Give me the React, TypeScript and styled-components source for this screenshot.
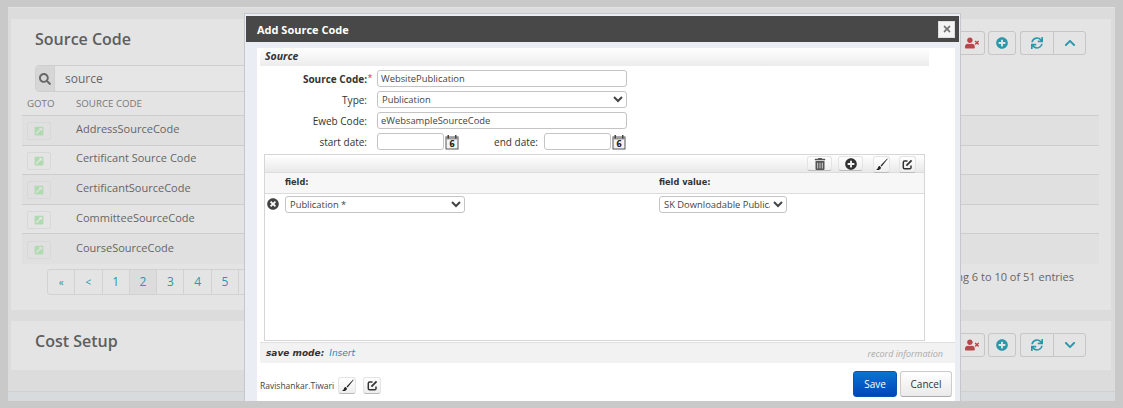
import {ReactNode} from "react";
import styled, {createGlobalStyle} from "styled-components";
import {
  FaChevronDown,
  FaChevronUp,
  FaExternalLinkSquareAlt,
  FaPlusCircle,
  FaSearch,
  FaSync,
  FaTimes,
  FaTimesCircle,
  FaTrashAlt,
  FaUserTimes,
} from "react-icons/fa";

const teal = "#2b97ab";
const textColor = "#5e5e5e";

const GlobalStyle = createGlobalStyle`
  html, body {
    margin: 0;
    padding: 0;
    height: 408px;
    overflow: hidden;
    background: #c9c9c9;
    font-family: "Open Sans", sans-serif;
  }
`;

const Screen = styled.div`
  position: relative;
  width: 1123px;
  height: 408px;
  padding: 7px 8px;
  box-sizing: border-box;
  overflow: hidden;
`;

const Page = styled.div`
  width: 1107px;
  height: 394px;
  box-sizing: border-box;
  padding: 11px 4px 0 3px;
  background: #dcdcdc;
  border-top: 1px solid #e2e2e2;
  display: flex;
  flex-direction: column;
  gap: 11px;
  position: relative;
`;

const PageFooter = styled.div`
  margin: auto -4px 0 -3px;
  height: 9px;
  background: #d8dbde;
  border-top: 1px solid #d0d0d0;
`;

const Panel = styled.section`
  background: #e4e4e4;
  padding: 0 12px 0 11px;
`;

const PanelHeader = styled.div<{$height: number}>`
  height: ${(p) => p.$height}px;
  padding: 12px 13px 0 13px;
  box-sizing: border-box;
  display: flex;
  justify-content: space-between;
  align-items: flex-start;
`;

const PanelTitle = styled.h2`
  margin: 0;
  font-size: 16px;
  line-height: 16px;
  font-weight: 600;
  color: ${textColor};
`;

const ButtonBar = styled.div`
  display: flex;
  gap: 3px;
`;

const ButtonGroup = styled.div`
  display: flex;
  margin-left: 1px;
`;

const BarButton = styled.div<{$color: string; $width: number; $size?: number}>`
  width: ${(p) => p.$width}px;
  height: 24px;
  box-sizing: border-box;
  border: 1px solid #c6c6c6;
  border-radius: 3px;
  color: ${(p) => p.$color};
  display: flex;
  align-items: center;
  justify-content: center;
  font-size: ${(p) => p.$size ?? 12}px;

  ${ButtonGroup} > &:first-child {
    border-radius: 3px 0 0 3px;
    border-right: none;
  }
  ${ButtonGroup} > &:last-child {
    border-radius: 0 3px 3px 0;
  }
`;

const SearchBox = styled.div`
  margin-left: 13px;
  width: 600px;
  height: 27px;
  box-sizing: border-box;
  border: 1px solid #cfcfcf;
  border-radius: 4px;
  display: flex;
  background: #e6e6e6;
`;

const SearchAddon = styled.div`
  width: 18px;
  background: #d6d6d6;
  color: #666;
  font-size: 12px;
  display: flex;
  align-items: center;
  justify-content: center;
  border-right: 1px solid #cfcfcf;
`;

const SearchText = styled.div`
  padding-left: 10px;
  font-size: 12px;
  line-height: 25px;
  color: #666;
`;

const TableHead = styled.div`
  display: grid;
  grid-template-columns: 49px 1fr;
  height: 24px;
  align-items: center;
  padding-left: 5px;
  padding-bottom: 1px;
  font-size: 9.7px;
  color: #777;
  text-transform: uppercase;
  border-bottom: 1px solid #cdcdcd;
  box-sizing: border-box;
`;

const Row = styled.div<{$dark: boolean}>`
  display: grid;
  grid-template-columns: 49px 1fr;
  height: 29.6px;
  padding-left: 5px;
  box-sizing: border-box;
  background: ${(p) => (p.$dark ? "#e0e0e0" : "#e4e4e4")};
  border-bottom: 1px solid #cdcdcd;
  align-items: center;

  &:last-child {
    border-bottom: none;
  }
`;

const GotoButton = styled.div`
  width: 24px;
  height: 18px;
  box-sizing: border-box;
  margin-top: 2px;
  border: 1px solid #d8d8d8;
  border-radius: 2px;
  color: #b0dbb0;
  font-size: 10px;
  display: flex;
  align-items: center;
  justify-content: center;
`;

const RowName = styled.div`
  font-size: 11px;
  line-height: 15px;
  margin-top: -4px;
  color: #666;
`;

const TableFoot = styled.div`
  display: flex;
  justify-content: space-between;
  align-items: flex-start;
  padding: 5px 25px 0 25px;
  height: 46px;
  box-sizing: border-box;
`;

const Pager = styled.div`
  display: flex;
  height: 26px;
  border: 1px solid #d2d2d2;
  border-radius: 3px;
  width: 500px;
  box-sizing: border-box;
`;

const PageLink = styled.div<{$active?: boolean; $small?: boolean}>`
  width: 27.3px;
  box-sizing: border-box;
  border-right: 1px solid #d2d2d2;
  background: ${(p) => (p.$active ? "#dcdcdc" : "transparent")};
  color: ${teal};
  font-size: ${(p) => (p.$small ? 10 : 12)}px;
  display: flex;
  align-items: center;
  justify-content: center;
`;

const EntryInfo = styled.div`
  font-size: 11px;
  line-height: 14px;
  color: #666;
  margin-top: 1px;
`;

const Dialog = styled.div`
  position: absolute;
  left: 244px;
  top: 13px;
  width: 717px;
  height: 388px;
  box-sizing: border-box;
  padding: 2px 0 0 1px;
  background: #eaeef4;
  border: 1px solid #c4c7cb;
  border-bottom: none;
  display: flex;
  flex-direction: column;
`;

const DialogTitle = styled.div`
  height: 26px;
  margin-right: 1px;
  flex: none;
  background: #484848;
  display: flex;
  align-items: center;
  justify-content: space-between;
  padding: 0 4px 0 11px;
  color: #fff;
  font-size: 11px;
  font-weight: 700;
`;

const CloseButton = styled.div`
  width: 17px;
  height: 17px;
  background: #f4f4f4;
  border: 1px solid #ddd;
  box-sizing: border-box;
  color: #777;
  font-size: 10px;
  display: flex;
  align-items: center;
  justify-content: center;
`;

const DialogBody = styled.div`
  flex: 1;
  margin: 6px 5px 0 11px;
  background: #fff;
  display: flex;
  flex-direction: column;
  min-height: 0;
`;

const SectionHead = styled.div`
  height: 18px;
  margin: 0 26px 0 3px;
  padding-left: 5px;
  background: linear-gradient(#fff, #ececec);
  font-size: 10.5px;
  line-height: 17px;
  font-weight: 700;
  font-style: italic;
  color: #333;
`;

const Form = styled.div`
  padding-top: 4px;
  display: flex;
  flex-direction: column;
  gap: 4px;
`;

const FormRow = styled.div`
  display: flex;
  align-items: center;
  height: 17px;
`;

const Label = styled.label<{$bold?: boolean; $width?: number}>`
  width: ${(p) => p.$width ?? 120}px;
  flex: none;
  padding-right: ${(p) => (p.$width ? 6 : 10)}px;
  box-sizing: border-box;
  text-align: right;
  font-size: 10px;
  font-weight: ${(p) => (p.$bold ? 700 : 400)};
  color: #333;
  position: relative;
`;

const Required = styled.span`
  position: absolute;
  right: 4.5px;
  top: -1px;
  color: #d33;
  font-size: 9px;
  font-weight: 400;
`;

const TextInput = styled.input<{$width: number}>`
  width: ${(p) => p.$width}px;
  height: 17px;
  flex: none;
  box-sizing: border-box;
  margin: 0;
  padding: 0 3px;
  border: 1px solid #c4c4c4;
  border-radius: 3px;
  outline: none;
  background: #fff;
  font-family: inherit;
  font-size: 9.4px;
  color: #444;
`;

const SelectInput = styled.select<{$width: number}>`
  width: ${(p) => p.$width}px;
  height: 17px;
  flex: none;
  box-sizing: border-box;
  margin: 0;
  padding: 0;
  border: 1px solid #c4c4c4;
  border-radius: 3px;
  outline: none;
  background: #fff;
  font-family: inherit;
  font-size: 9.4px;
  color: #444;
`;

const DateIcon = styled.svg`
  flex: none;
  margin-left: 1px;
`;

const GridPanel = styled.div`
  margin: 4px 0 0 7px;
  width: 661px;
  height: 187px;
  box-sizing: border-box;
  border: 1px solid #d6d6d6;
  flex: none;
`;

const GridToolbar = styled.div`
  height: 18px;
  background: linear-gradient(#fff, #e9e9e9);
  border-bottom: 1px solid #dcdcdc;
  display: flex;
  justify-content: flex-end;
  padding-right: 8px;
  gap: 6px;
  box-sizing: border-box;
`;

const ToolButton = styled.div<{$width: number; $gap?: number; $flat?: boolean; $tone?: string}>`
  width: ${(p) => p.$width}px;
  height: ${(p) => (p.$flat ? 15 : 17)}px;
  box-sizing: border-box;
  margin-left: ${(p) => p.$gap ?? 0}px;
  margin-top: 1px;
  border-radius: 3px;
  border: 1px solid #e4e4e4;
  border-bottom-color: #bbb;
  background: linear-gradient(#fff, #eee);
  color: ${(p) => p.$tone ?? "#333"};
  font-size: ${(p) => (p.$flat ? 12 : 11)}px;
  display: flex;
  align-items: ${(p) => (p.$flat ? "flex-end" : "center")};
  justify-content: center;
  overflow: hidden;
`;

const GridCols = styled.div`
  display: grid;
  grid-template-columns: 374px 1fr;
  padding-left: 20px;
`;

const GridHead = styled(GridCols)`
  height: 21px;
  align-items: center;
  padding-bottom: 2px;
  background: #f7f7f7;
  border-bottom: 1px solid #dcdcdc;
  box-sizing: border-box;
  font-family: "DejaVu Sans", sans-serif;
  font-size: 8.2px;
  font-weight: 700;
  color: #333;
`;

const GridRow = styled(GridCols)`
  position: relative;
  padding-top: 2px;
`;

const RemoveIcon = styled.div`
  position: absolute;
  left: 2px;
  top: 4px;
  color: #444;
  font-size: 12px;
  line-height: 0;
`;

const SaveBar = styled.div`
  margin: 1px 0 0 3px;
  height: 21px;
  box-sizing: border-box;
  background: #f2f2f2;
  border-top: 1px solid #dedede;
  display: flex;
  align-items: center;
  justify-content: space-between;
  padding: 0 12px 0 6px;
`;

const SaveMode = styled.div`
  font-family: "DejaVu Sans", sans-serif;
  font-size: 9px;
  font-style: italic;
  font-weight: 700;
  color: #333;
`;

const SaveModeValue = styled.span`
  font-weight: 400;
  color: #1b8db8;
  margin-left: 5px;
`;

const RecordInfo = styled.div`
  font-size: 9px;
  font-style: italic;
  color: #aaa;
`;

const DialogFooter = styled.div`
  flex: 1;
  display: flex;
  justify-content: space-between;
  align-items: center;
  padding: 4px 3px 0 3px;
`;

const UserInfo = styled.div`
  display: flex;
  align-items: center;
  gap: 7px;
  font-size: 8.5px;
  color: #444;
  margin-top: 2px;
`;

const FooterActions = styled.div`
  display: flex;
  gap: 3px;
`;

const SaveButton = styled.button`
  width: 44px;
  height: 26px;
  margin: 0;
  padding: 0;
  border: 1px solid #0a55b0;
  border-radius: 3px;
  background: linear-gradient(#0a74d0, #0046b8);
  color: #fff;
  font-family: inherit;
  font-size: 10px;
`;

const CancelButton = styled.button`
  width: 52px;
  height: 26px;
  margin: 0;
  padding: 0;
  border: 1px solid #ccc;
  border-bottom-color: #aaa;
  border-radius: 3px;
  background: linear-gradient(#fff, #eaeaea);
  color: #333;
  font-family: inherit;
  font-size: 10px;
`;

const CalendarIcon = () => (
  <DateIcon width="14" height="16" viewBox="0 0 14 16">
    <rect x="1" y="3" width="12" height="12" fill="#f4f4f4" stroke="#555" />
    <rect x="1.5" y="3.5" width="11" height="2" fill="#999" />
    <rect x="2.5" y="1" width="1.5" height="3.5" fill="#444" />
    <rect x="10" y="1" width="1.5" height="3.5" fill="#444" />
    <text
      x="7"
      y="13.4"
      textAnchor="middle"
      fontSize="8"
      fontWeight="700"
      fontFamily="DejaVu Sans, sans-serif"
      fill="#222"
    >
      6
    </text>
  </DateIcon>
);

const BrushIcon = () => (
  <svg width="13" height="13" viewBox="0 0 13 13">
    <path d="M12.2 0.6 5.6 7.4 6.6 8.4 12.6 1Z" fill="#222" />
    <path d="M4.7 8C3.2 8.2 3 9.4 2.6 10.4 2.3 11.1 1.6 11.5 1 11.7 2.6 12.5 5 12.1 5.7 10.6 6 9.9 6 9.3 5.7 9Z" fill="#222" />
  </svg>
);

const EditIcon = () => (
  <svg width="11" height="11" viewBox="0 0 11 11" fill="none" stroke="#333">
    <path d="M9 6.5V8.5C9 9.3 8.4 9.8 7.7 9.8H2.6C1.8 9.8 1.3 9.3 1.3 8.5V3.4C1.3 2.7 1.8 2.1 2.6 2.1H5.5" strokeWidth="1.5" />
    <path d="M4.4 6.7 9.6 1.4" strokeWidth="1.8" />
  </svg>
);

const rows = [
  "AddressSourceCode",
  "Certificant Source Code",
  "CertificantSourceCode",
  "CommitteeSourceCode",
  "CourseSourceCode",
];

const pages = ["«", "<", "1", "2", "3", "4", "5", "6"];

const PanelButtons = ({toggle}: {toggle: ReactNode}) => (
  <ButtonBar>
    <BarButton $color="#b5484b" $width={27} $size={14}>
      <FaUserTimes />
    </BarButton>
    <BarButton $color={teal} $width={28}>
      <FaPlusCircle />
    </BarButton>
    <ButtonGroup>
      <BarButton $color={teal} $width={33}>
        <FaSync />
      </BarButton>
      <BarButton $color={teal} $width={33}>
        {toggle}
      </BarButton>
    </ButtonGroup>
  </ButtonBar>
);

export default function App(): JSX.Element {
  return (
    <Screen>
      <GlobalStyle />
      <Page>
        <Panel>
          <PanelHeader $height={46}>
            <PanelTitle>Source Code</PanelTitle>
            <PanelButtons toggle={<FaChevronUp />} />
          </PanelHeader>
          <SearchBox>
            <SearchAddon>
              <FaSearch />
            </SearchAddon>
            <SearchText>source</SearchText>
          </SearchBox>
          <TableHead>
            <div>Goto</div>
            <div>Source Code</div>
          </TableHead>
          <div>
            {rows.map((name, i) => (
              <Row key={name} $dark={i % 2 === 0}>
                <GotoButton>
                  <FaExternalLinkSquareAlt />
                </GotoButton>
                <RowName>{name}</RowName>
              </Row>
            ))}
          </div>
          <TableFoot>
            <Pager>
              {pages.map((p, i) => (
                <PageLink key={p} $active={p === "2"} $small={i < 2}>
                  {p}
                </PageLink>
              ))}
            </Pager>
            <EntryInfo>Showing 6 to 10 of 51 entries</EntryInfo>
          </TableFoot>
        </Panel>
        <Panel>
          <PanelHeader $height={49}>
            <PanelTitle>Cost Setup</PanelTitle>
            <PanelButtons toggle={<FaChevronDown />} />
          </PanelHeader>
        </Panel>
        <PageFooter />
      </Page>
      <Dialog>
        <DialogTitle>
          Add Source Code
          <CloseButton>
            <FaTimes />
          </CloseButton>
        </DialogTitle>
        <DialogBody>
          <SectionHead>Source</SectionHead>
          <Form>
            <FormRow>
              <Label $bold>
                Source Code:<Required>*</Required>
              </Label>
              <TextInput $width={250} defaultValue="WebsitePublication" />
            </FormRow>
            <FormRow>
              <Label>Type:</Label>
              <SelectInput $width={250} defaultValue="Publication">
                <option>Publication</option>
              </SelectInput>
            </FormRow>
            <FormRow>
              <Label>Eweb Code:</Label>
              <TextInput $width={250} defaultValue="eWebsampleSourceCode" />
            </FormRow>
            <FormRow>
              <Label>start date:</Label>
              <TextInput $width={67} />
              <CalendarIcon />
              <Label $width={85}>end date:</Label>
              <TextInput $width={67} />
              <CalendarIcon />
            </FormRow>
          </Form>
          <GridPanel>
            <GridToolbar>
              <ToolButton $width={25} $flat $tone="#555">
                <FaTrashAlt />
              </ToolButton>
              <ToolButton $width={25} $flat>
                <FaPlusCircle />
              </ToolButton>
              <ToolButton $width={17} $gap={4}>
                <BrushIcon />
              </ToolButton>
              <ToolButton $width={17} $gap={3}>
                <EditIcon />
              </ToolButton>
            </GridToolbar>
            <GridHead>
              <div>field:</div>
              <div>field value:</div>
            </GridHead>
            <GridRow>
              <RemoveIcon>
                <FaTimesCircle />
              </RemoveIcon>
              <SelectInput $width={180} defaultValue="Publication *">
                <option>Publication *</option>
              </SelectInput>
              <SelectInput $width={128} defaultValue="SK Downloadable Publication">
                <option>SK Downloadable Publication</option>
              </SelectInput>
            </GridRow>
          </GridPanel>
          <SaveBar>
            <SaveMode>
              save mode:<SaveModeValue>Insert</SaveModeValue>
            </SaveMode>
            <RecordInfo>record information</RecordInfo>
          </SaveBar>
          <DialogFooter>
            <UserInfo>
              Ravishankar.Tiwari
              <ToolButton $width={18} $gap={-3}>
                <BrushIcon />
              </ToolButton>
              <ToolButton $width={18}>
                <EditIcon />
              </ToolButton>
            </UserInfo>
            <FooterActions>
              <SaveButton>Save</SaveButton>
              <CancelButton>Cancel</CancelButton>
            </FooterActions>
          </DialogFooter>
        </DialogBody>
      </Dialog>
    </Screen>
  );
}
